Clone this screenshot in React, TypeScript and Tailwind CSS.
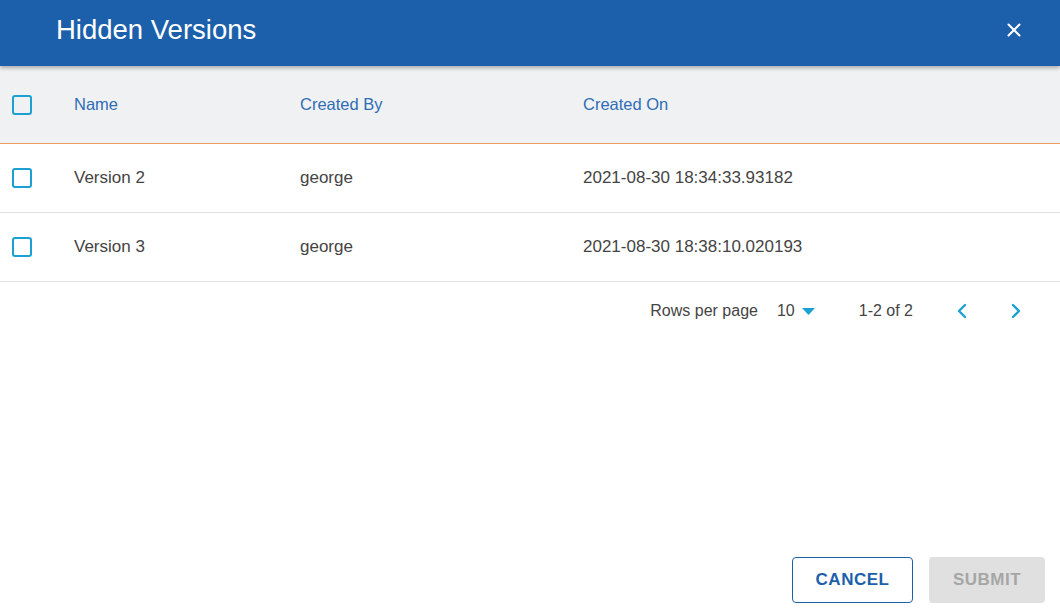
import { X, ChevronLeft, ChevronRight } from "lucide-react";

const rows = [
  { id: 2, name: "Version 2", createdBy: "george", createdOn: "2021-08-30 18:34:33.93182" },
  { id: 3, name: "Version 3", createdBy: "george", createdOn: "2021-08-30 18:38:10.020193" },
];

const Checkbox = () => (
  <div className="w-5 h-5 border-2 border-[#1ba0d2] rounded-[3px] bg-transparent" />
);

export default function App() {
  return (
    <div className="h-screen w-full flex flex-col bg-white font-['Liberation_Sans',Arial,sans-serif]">
      <header className="relative z-10 h-[66px] bg-[#1c5fab] flex items-center justify-between pl-14 pr-[35px] pb-[6px] shadow-[0_2px_4px_rgba(0,0,0,0.3)]">
        <h1 className="text-[27.5px] text-white">Hidden Versions</h1>
        <X className="text-white" size={22} strokeWidth={2.2} />
      </header>

      <div className="flex h-[78px] items-center bg-[#f0f1f3] border-b border-[#ee9a60] text-[16.5px] text-[#2f6db5]">
        <div className="w-[74px] pl-3">
          <Checkbox />
        </div>
        <div className="w-[226px]">Name</div>
        <div className="w-[283px]">Created By</div>
        <div className="flex-1">Created On</div>
      </div>

      {rows.map((row) => (
        <div
          key={row.id}
          className="flex h-[69px] items-center border-b border-[#e0e0e0] text-[17px] text-[#444]"
        >
          <div className="w-[74px] pl-3">
            <Checkbox />
          </div>
          <div className="w-[226px]">{row.name}</div>
          <div className="w-[283px]">{row.createdBy}</div>
          <div className="flex-1">{row.createdOn}</div>
        </div>
      ))}

      <div className="flex h-[58px] items-center justify-end pr-8 text-[16px] text-[#444]">
        <span>Rows per page</span>
        <span className="ml-[19px]">10</span>
        <svg className="ml-[7px]" width="13" height="7" viewBox="0 0 13 7">
          <path d="M0 0 L13 0 L6.5 7 Z" fill="#1ba0d2" />
        </svg>
        <span className="ml-[44px]">1-2 of 2</span>
        <ChevronLeft className="ml-[37px] text-[#1ba0d2]" size={24} strokeWidth={2.4} />
        <ChevronRight className="ml-[30px] text-[#1ba0d2]" size={24} strokeWidth={2.4} />
      </div>

      <div className="flex-1" />

      <div className="flex justify-end gap-4 pr-[15px] pb-2">
        <button className="w-[121px] h-[46px] border border-[#1c5fab] rounded-[4px] text-[17px] font-bold tracking-[0.5px] text-[#1c5fab]">
          CANCEL
        </button>
        <button className="w-[116px] h-[46px] rounded-[4px] bg-[#e0e0e0] text-[17px] font-bold tracking-[0.5px] text-[#a6a6a6]">
          SUBMIT
        </button>
      </div>
    </div>
  );
}
